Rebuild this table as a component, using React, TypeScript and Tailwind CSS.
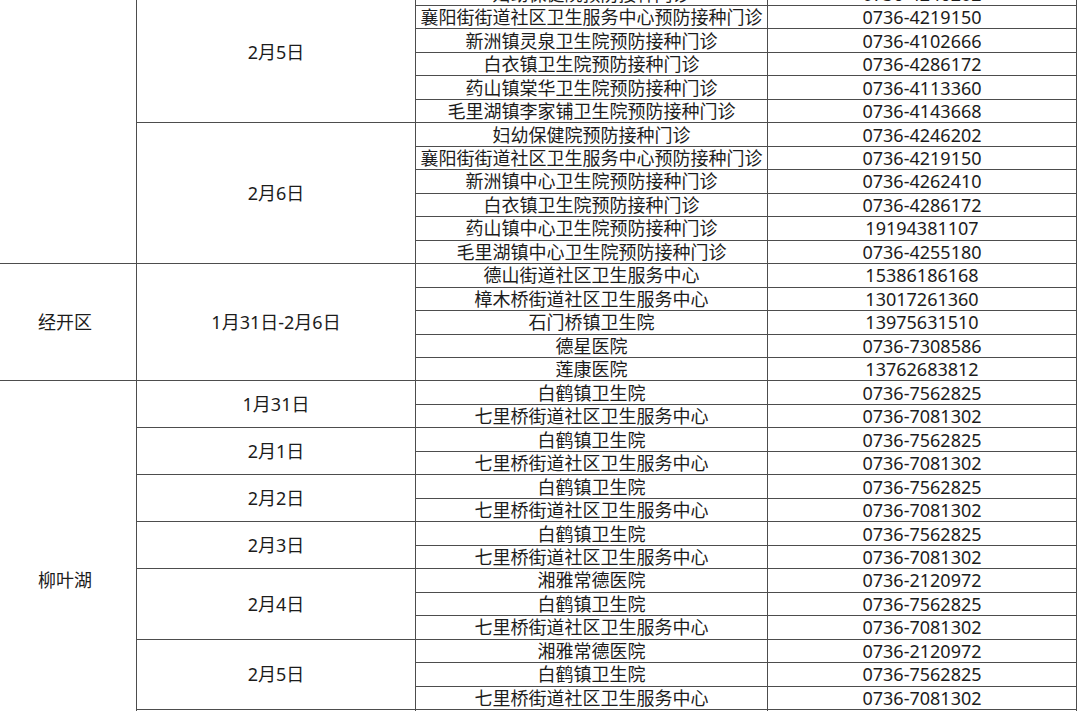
type Clinic = { name: string; phone: string };
type DateGroup = { date: string; clinics: Clinic[] };
type District = { name: string; groups: DateGroup[] };

const baihe: Clinic = { name: "白鹤镇卫生院", phone: "0736-7562825" };
const qiliqiao: Clinic = { name: "七里桥街道社区卫生服务中心", phone: "0736-7081302" };
const xiangya: Clinic = { name: "湘雅常德医院", phone: "0736-2120972" };

const districts: District[] = [
  {
    name: "",
    groups: [
      {
        date: "2月5日",
        clinics: [
          { name: "妇幼保健院预防接种门诊", phone: "0736-4246202" },
          { name: "襄阳街街道社区卫生服务中心预防接种门诊", phone: "0736-4219150" },
          { name: "新洲镇灵泉卫生院预防接种门诊", phone: "0736-4102666" },
          { name: "白衣镇卫生院预防接种门诊", phone: "0736-4286172" },
          { name: "药山镇棠华卫生院预防接种门诊", phone: "0736-4113360" },
          { name: "毛里湖镇李家铺卫生院预防接种门诊", phone: "0736-4143668" },
        ],
      },
      {
        date: "2月6日",
        clinics: [
          { name: "妇幼保健院预防接种门诊", phone: "0736-4246202" },
          { name: "襄阳街街道社区卫生服务中心预防接种门诊", phone: "0736-4219150" },
          { name: "新洲镇中心卫生院预防接种门诊", phone: "0736-4262410" },
          { name: "白衣镇卫生院预防接种门诊", phone: "0736-4286172" },
          { name: "药山镇中心卫生院预防接种门诊", phone: "19194381107" },
          { name: "毛里湖镇中心卫生院预防接种门诊", phone: "0736-4255180" },
        ],
      },
    ],
  },
  {
    name: "经开区",
    groups: [
      {
        date: "1月31日-2月6日",
        clinics: [
          { name: "德山街道社区卫生服务中心", phone: "15386186168" },
          { name: "樟木桥街道社区卫生服务中心", phone: "13017261360" },
          { name: "石门桥镇卫生院", phone: "13975631510" },
          { name: "德星医院", phone: "0736-7308586" },
          { name: "莲康医院", phone: "13762683812" },
        ],
      },
    ],
  },
  {
    name: "柳叶湖",
    groups: [
      { date: "1月31日", clinics: [baihe, qiliqiao] },
      { date: "2月1日", clinics: [baihe, qiliqiao] },
      { date: "2月2日", clinics: [baihe, qiliqiao] },
      { date: "2月3日", clinics: [baihe, qiliqiao] },
      { date: "2月4日", clinics: [xiangya, baihe, qiliqiao] },
      { date: "2月5日", clinics: [xiangya, baihe, qiliqiao] },
      { date: "2月6日", clinics: [xiangya, baihe, qiliqiao] },
    ],
  },
];

const cell = "border border-[#4d4d4d] text-center align-middle p-0 leading-none";

export default function App() {
  return (
    <div
      className="h-[711px] w-[1080px] overflow-hidden bg-white text-[18px] text-[#1c1c1c]"
      style={{ fontFamily: '"Noto Sans", "Noto Sans CJK SC", sans-serif' }}
    >
      <table className="-ml-[7px] -mt-[18.5px] w-[1083px] table-fixed border-collapse">
        <colgroup>
          <col className="w-[143px]" />
          <col className="w-[279px]" />
          <col className="w-[352px]" />
          <col className="w-[309px]" />
        </colgroup>
        <tbody>
          {districts.map((d, di) => {
            const total = d.groups.reduce((n, g) => n + g.clinics.length, 0);
            return d.groups.map((g, gi) =>
              g.clinics.map((c, ci) => (
                <tr key={`${di}-${gi}-${ci}`} className="h-[23.47px]">
                  {gi === 0 && ci === 0 && (
                    <td rowSpan={total} className={cell}>
                      {d.name}
                    </td>
                  )}
                  {ci === 0 && (
                    <td rowSpan={g.clinics.length} className={cell}>
                      {g.date}
                    </td>
                  )}
                  <td className={`${cell} whitespace-nowrap`}>{c.name}</td>
                  <td className={cell}>{c.phone}</td>
                </tr>
              ))
            );
          })}
        </tbody>
      </table>
    </div>
  );
}
